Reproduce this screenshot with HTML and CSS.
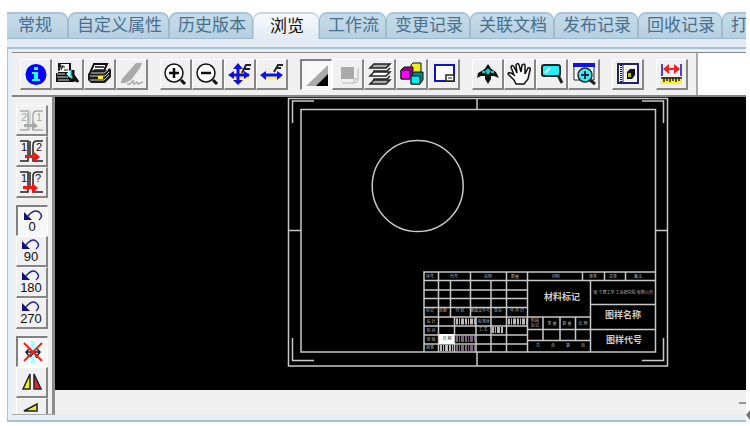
FILE: index.html
```html
<!DOCTYPE html>
<html lang="zh-CN">
<head>
<meta charset="utf-8">
<title>浏览</title>
<link rel="stylesheet" href="styles.css">
</head>
<body>
<div class="window">
  <nav class="tabs">
    <button class="tab tab-first">常规</button>
    <button class="tab">自定义属性</button>
    <button class="tab">历史版本</button>
    <button class="tab tab-active">浏览</button>
    <button class="tab">工作流</button>
    <button class="tab">变更记录</button>
    <button class="tab">关联文档</button>
    <button class="tab">发布记录</button>
    <button class="tab">回收记录</button>
    <button class="tab tab-last">打</button>
  </nav>
  <main class="panel">
    <div class="viewer">
      <header class="topbar">
        <div class="toolbar">
          <div class="group">
            <button class="tool" aria-label="信息"><svg viewBox="0 0 28 27"><circle cx="15" cy="14.500" r="10.500" fill="#00f"/><path d="M13 7h4v3h-4zM11 12h6v7h2v2h-8v-2h2v-5h-2z" fill="#2ff"/></svg></button>
            <button class="tool" aria-label="打印预览"><svg viewBox="0 0 28 27"><path d="M5 3h13v7l3 2v10H3v-9h2z" fill="#111"/><path d="M8 4h8v8H5z" fill="#f4f4f4"/><path d="M8 5l-2 6M8 7h4M10 5l-2 5M11 10h4" stroke="#111" fill="none"/><path d="M4 14h8M4 17h11M5 20h11" stroke="#ddd"/><path d="M13 14l6-5 2 5-2 5z" fill="#4ee"/><path d="M17 10v8l-3-4z" fill="#dff"/><path d="M20 10v5l5 7M20 18l3 3" stroke="#111" stroke-width="3" fill="none"/></svg></button>
            <button class="tool" aria-label="打印"><svg viewBox="0 0 28 27"><path d="M9 4h13l-4 9H5z" fill="#fff" stroke="#111" stroke-width="2"/><path d="M10 7h9M9 10h9" stroke="#111" stroke-width="1.500"/><path d="M3 14l5-4h14l3-2 1 2v7l-6 6H6l-3-3z" fill="#1c1c1c"/><path d="M6 13h13l4-3M5 16h15l4-4M5 20h14l5-5" stroke="#ccc" fill="none"/><path d="M13 16h5v3h-5z" fill="#fe2"/></svg></button>
            <button class="tool" aria-label="标注"><svg viewBox="0 0 28 27"><path d="M19 3h6l-2 5-9 12-6 3H4l1-4z" fill="#aaa"/><path d="M4 23l6-6M10 24h3l3-3 1 3 3-2 1 2 5-2" stroke="#aaa" fill="none" stroke-width="1.500"/></svg></button>
          </div>
          <div class="group">
            <button class="tool" aria-label="放大"><svg viewBox="0 0 28 27"><circle cx="13" cy="13" r="9" fill="#fff" stroke="#111" stroke-width="1.500"/><path d="M8 13h10M13 8v10" stroke="#111" stroke-width="2.500"/><path d="M20 20l4 4" stroke="#111" stroke-width="3"/></svg></button>
            <button class="tool" aria-label="缩小"><svg viewBox="0 0 28 27"><circle cx="13" cy="13" r="9" fill="#fff" stroke="#111" stroke-width="1.500"/><path d="M8 13h10" stroke="#111" stroke-width="2.500"/><path d="M20 20l4 4" stroke="#111" stroke-width="3"/></svg></button>
            <button class="tool" aria-label="适合窗口"><svg viewBox="0 0 28 27"><path d="M7 18h17M15 8v15" stroke="#fe4" stroke-width="2"/><path d="M6 15h18M13 6v17" stroke="#11d" stroke-width="3"/><path d="M8 9l5-6 5 6zM8 20l5 5 5-5zM9 11v8l-6-4zM19 11v8l6-4z" fill="#11d"/><path d="M17 13l4-8h5M20 9h5" stroke="#222" stroke-width="2" fill="none"/></svg></button>
            <button class="tool" aria-label="适合宽度"><svg viewBox="0 0 28 27"><path d="M7 18h17" stroke="#fe4" stroke-width="2"/><path d="M6 15h17" stroke="#11e" stroke-width="3"/><path d="M9 11v9l-6-5zM20 11v9l6-5z" fill="#11e"/><path d="M17 12l4-7h5M19 8h5" stroke="#222" stroke-width="2" fill="none"/></svg></button>
          </div>
          <div class="group">
            <button class="tool tool-pressed" aria-label="黑白"><svg viewBox="0 0 28 27"><path d="M4 4h22v21H4z" fill="#f8f8f8"/><path d="M26 4v21H4z" fill="#aaa"/><path d="M26 13v12H14z" fill="#000"/></svg></button>
            <button class="tool" aria-label="线宽"><svg viewBox="0 0 28 27"><path d="M8 7h13v12H8z" fill="#aaa"/><path d="M25 8v11q0 4-4 4H9M21 19v4M21 19h4" stroke="#b8b8b8" fill="none"/></svg></button>
            <button class="tool" aria-label="图层"><svg viewBox="0 0 28 27"><g fill="#aaa" stroke="#222" stroke-width="1.500"><path d="M9 4h16l-4 4H5z"/><path d="M9 12h16l-4 4H5z" fill="#fff"/><path d="M9 20h16l-4 4H5z"/></g><path d="M8 11h14l3-3M8 19h14l3-3" stroke="#222" fill="none" stroke-width="1.500"/></svg></button>
            <button class="tool" aria-label="部件"><svg viewBox="0 0 28 27"><g stroke="#111"><path d="M14 5l2-2h8v8l-2 3h-8z" fill="#ee2"/><path d="M4 10l3-3h9v9l-3 3H4z" fill="#908"/><path d="M4 10h9v9H4z" fill="#f0f"/><path d="M14 16l3-4h9v8l-3 4h-9z" fill="#088"/><path d="M14 16h9v8h-9z" fill="#0ee"/></g></svg></button>
            <button class="tool" aria-label="视图"><svg viewBox="0 0 28 27"><path d="M6 5h19v16H6z" fill="#fff" stroke="#11c" stroke-width="2"/><path d="M17 15h8v6h-8z" fill="#fff" stroke="#222" stroke-width="1.500"/><path d="M19 18h4" stroke="#222"/></svg></button>
          </div>
          <div class="group">
            <button class="tool" aria-label="旋转"><svg viewBox="0 0 28 27"><path d="M15 4l4 6h-1v9l-3 5-3-5v-9h-1z" fill="#111"/><path d="M12 9l-7 4-1 5 4-2h5zM18 9l5 3 3 6-5-2h-4z" fill="#111"/><path d="M15 8l3 3-3 4-3-4zM9 11h3v2H9zM18 11h3v2h-3z" fill="#1cc"/></svg></button>
            <button class="tool" aria-label="平移"><svg viewBox="0 0 28 27"><path d="M11 24l-2-4-6-6q0-2 3-1l3 2-3-8q1-3 3 0l3 6-1-8q2-3 3 0l2 7 1-7q3-2 3 1v8l3-6q3-1 2 2l-2 9-4 5z" fill="#fff" stroke="#111" stroke-width="1.500"/></svg></button>
            <button class="tool" aria-label="放大镜"><svg viewBox="0 0 28 27"><path d="M7 5h14q2 0 2 2v7q0 2-2 2H7q-2 0-2-2V7q0-2 2-2z" fill="#2ef" stroke="#222" stroke-width="2"/><path d="M8 13l5-5" stroke="#dff" stroke-width="2"/><path d="M21 15l4 8" stroke="#222" stroke-width="3"/></svg></button>
            <button class="tool" aria-label="窗口缩放"><svg viewBox="0 0 28 27"><path d="M5 4h20v16H5z" fill="#fff" stroke="#222"/><path d="M4 3h22v4H4z" fill="#11e"/><circle cx="16" cy="15" r="7" fill="#3ee" stroke="#222" stroke-width="1.500"/><path d="M12 15h8M16 11v8" stroke="#124" stroke-width="2"/><path d="M21 20l5 4" stroke="#222" stroke-width="3"/></svg></button>
          </div>
          <div class="group">
            <button class="tool" aria-label="手册"><svg viewBox="0 0 28 27"><path d="M5 4h20v19H5z" fill="#fff" stroke="#226" stroke-width="2"/><path d="M10 4v19" stroke="#226"/><path d="M8 5v17" stroke="#111" stroke-width="2" stroke-dasharray="1 1"/><path d="M12 7h11v14H12z" fill="#eee"/><path d="M14 12l3-3h5v6l-3 4h-5z" fill="#111"/><path d="M15 13h3v4h-3z" fill="#bb1"/></svg></button>
          </div>
          <div class="group">
            <button class="tool" aria-label="测量"><svg viewBox="0 0 28 27"><path d="M5 4v12M24 4v12" stroke="#44d" stroke-width="2"/><path d="M8 9h13" stroke="#e22" stroke-width="2"/><path d="M12 4v10L6 9zM17 4v10l6-5z" fill="#e22"/><path d="M4 17h21v7H4z" fill="#fe2"/><path d="M4 18h21M7 17v5M10 17v4M13 17v5M16 17v4M19 17v5M22 17v4" stroke="#222" stroke-width="1.500"/></svg></button>
          </div>
        </div>
      </header>
      <div class="workspace">
        <aside class="sidebar">
          <div class="side-group">
            <button class="tool" aria-label="比较 2 1"><svg viewBox="0 0 28 27"><g fill="none" stroke="#aaa" stroke-width="1.500"><path d="M3 5h8v19H3M26 5h-6q-4 0-4 4v15h10"/></g><path d="M13 5v19" stroke="#bbb"/><text x="4" y="15" class="mark mark-off">2</text><text x="19" y="15" class="mark mark-off">1</text><path d="M7 18h8v-3l6 5-6 4v-3H7z" fill="#aaa"/></svg></button>
            <button class="tool" aria-label="比较 1 2"><svg viewBox="0 0 28 27"><g fill="none" stroke="#222" stroke-width="1.500"><path d="M3 4h8v20H3M26 4h-6q-4 0-4 4v16h10M13 4v14"/></g><text x="4" y="14" class="mark">1</text><text x="19" y="14" class="mark">2</text><path d="M8 18h9v-3l6 5-6 5v-4H8z" fill="#f11"/></svg></button>
            <button class="tool" aria-label="比较 1 ?"><svg viewBox="0 0 28 27"><g fill="none" stroke="#222" stroke-width="1.500"><path d="M3 4h8v20H3M26 4h-6q-4 0-4 4v16h10M13 4v14"/></g><text x="4" y="14" class="mark">1</text><text x="18" y="14" class="mark">?</text><path d="M6 18h9v-3l6 5-6 5v-4H6z" fill="#f11"/></svg></button>
          </div>
          <div class="side-group">
            <button class="tool tool-pressed"><svg viewBox="0 0 28 27"><path d="M10 9q6-7 11-4 5 4 0 8" fill="none" stroke="#228" stroke-width="1.500"/><path d="M6 5v8h8z" fill="#117"/><text x="14" y="24" class="degree">0</text></svg></button>
            <button class="tool"><svg viewBox="0 0 28 27"><path d="M9 8q6-7 10-4 5 4 0 8" fill="none" stroke="#228" stroke-width="1.500"/><path d="M5 4v8h8z" fill="#117"/><text x="14" y="24" class="degree">90</text></svg></button>
            <button class="tool"><svg viewBox="0 0 28 27"><path d="M9 8q6-7 10-4 5 4 0 8" fill="none" stroke="#228" stroke-width="1.500"/><path d="M5 4v8h8z" fill="#117"/><text x="14" y="24" class="degree">180</text></svg></button>
            <button class="tool"><svg viewBox="0 0 28 27"><path d="M9 8q6-7 10-4 5 4 0 8" fill="none" stroke="#228" stroke-width="1.500"/><path d="M5 4v8h8z" fill="#117"/><text x="14" y="24" class="degree">270</text></svg></button>
          </div>
          <div class="side-group">
            <button class="tool tool-pressed" aria-label="取消镜像"><svg viewBox="0 0 28 27"><path d="M15 3v22" stroke="#aff" stroke-width="5"/><path d="M8 14h13M11 11l-3 3 3 4M19 11l3 3-3 4M12 19l4-5 3 6" stroke="#222" stroke-width="1.500" fill="none"/><path d="M6 5l18 18M24 5L6 23" stroke="#e22" stroke-width="2"/></svg></button>
            <button class="tool" aria-label="水平镜像"><svg viewBox="0 0 28 27"><path d="M13 6v15H6z" fill="#ee2" stroke="#222" stroke-width="1.500"/><path d="M17 6v15h7z" fill="#e22" stroke="#222" stroke-width="1.500"/></svg></button>
            <button class="tool" aria-label="垂直镜像"><svg viewBox="0 0 28 27"><path d="M7 12h13V5z" fill="#ee2" stroke="#222" stroke-width="1.500"/><path d="M7 18h13v6z" fill="#e22" stroke="#222" stroke-width="1.500"/></svg></button>
          </div>
        </aside>
        <section class="stage">
          <svg class="drawing" viewBox="55 97 691 293" role="img" aria-label="图纸">
            <g class="frame">
              <path d="M288.500 98.500h379v267.500h-379zM301 109.500h354.500V352H301z"/>
              <path d="M477 98v11M477 352v14M288 230.500h13M655 230.500h13"/>
              <path d="M292.500 123v-22H314M642 101h21.500v22M292.500 338v22.500H314M642 360.500h21.500V338"/>
              <circle cx="417.700" cy="186" r="45.500"/>
            </g>
            <g class="frame">
              <path d="M424 352v-80h231M424 280.500h231M424 290h103.500M424 298.500h103.500M424 307.500h103.500M424 317h166.500M424 326h103.500M424 335h103.500M424 344h103.500"/>
              <path d="M438.500 272v80M450.500 281v36M470.500 272v45M491 281v71M506.500 272v80M527.500 272v80M454.500 317v35M476 317v35"/>
              <path d="M582.500 272v8M604.500 272v8M625.500 272v8M590.500 281v71M590.500 304.500h65M527.500 329.500H655M527.500 340.500h63M543 317v24M560 317v24M575.500 317v24"/>
            </g>
            <path d="M439 334h15v10h-15z" fill="#fff"/>
            <g class="noise">
              <path d="M456 321.500h20M508 321.500h19M492 330h12M440 348h13"/>
              <path d="M456 339h19M456 348h19" class="dim"/>
            </g>
            <g class="fine">
              <text x="430" y="278">序号</text><text x="454" y="278">代号</text><text x="488" y="278">名称</text><text x="515" y="278">数量</text><text x="556" y="278">材料</text><text x="593" y="278">单重</text><text x="613" y="278">总重</text><text x="638" y="278">备注</text>
              <text x="430" y="312">标记</text><text x="443" y="312">处数</text><text x="460" y="312">分 区</text><text x="480" y="312">更改文件号</text><text x="498" y="312">签名</text><text x="517" y="312">年 月 日</text>
              <text x="431" y="323">设 计</text><text x="431" y="332">校 对</text><text x="431" y="341">审 核</text><text x="430" y="349">批准</text><text x="484" y="323">标准化</text><text x="483" y="331">工 艺</text>
              <text x="447" y="340" class="ink">日 期</text>
              <text x="535" y="322">阶段</text><text x="535" y="327">标记</text><text x="552" y="325">重 量</text><text x="567" y="325">数 量</text><text x="583" y="325">比 例</text>
              <text x="538" y="347">共</text><text x="553" y="347">页</text><text x="568" y="347">第</text><text x="583" y="347">页</text>
              <text x="623" y="294" class="company">南 宁理工学 工业研究院 有限公司</text>
            </g>
            <g class="title">
              <text x="562" y="300">材料标记</text><text x="623" y="318">图样名称</text><text x="624" y="343">图样代号</text>
            </g>
          </svg>
          <footer class="status"><span class="grip"></span></footer>
        </section>
      </div>
    </div>
  </main>
  <svg class="edge-arrow" viewBox="0 0 4 10"><path d="M4 0v10L0 5z" fill="#777"/></svg>
</div>
</body>
</html>
```
FILE: styles.css
```css
* { box-sizing: border-box; }

body {
  margin: 0;
  background: #fff;
  font-family: "Liberation Sans", "Noto Sans CJK SC", sans-serif;
}

button {
  margin: 0;
  padding: 0;
  font: inherit;
}

.window {
  position: relative;
  display: flex;
  flex-direction: column;
  height: 100vh;
  padding: 12px 4px 4px 7px;
}

.tabs {
  display: flex;
  flex: none;
  height: 27px;
  overflow: hidden;
}

.tab {
  flex: none;
  height: 27px;
  padding: 0 6px 0 8px;
  border: 1px solid #9dbacd;
  border-top: 2px solid #a9c3d4;
  border-radius: 8px 8px 0 0;
  background: linear-gradient(#c6dbe9, #b6d0e1);
  color: #47708f;
  font-size: 17px;
  line-height: 24px;
  white-space: nowrap;
}

.tab-first {
  padding-left: 11px;
  padding-right: 15px;
  border-left: 0;
  border-top-left-radius: 0;
}

.tab-active {
  padding: 0 14px 0 16px;
  border-color: #c4d6e4;
  border-bottom: 0;
  background: linear-gradient(#f6fafd, #e2ebf3);
  color: #111;
}

.tab-last { padding-right: 60px; }

.panel {
  flex: 1;
  min-height: 0;
  padding: 3px 0 5px 4px;
  border-top: 2px solid #a8c0d2;
  border-left: 1px solid #a8c4da;
  border-bottom: 2px solid #a8c0d4;
  background: #e6eef6;
  margin-top: 8px;
  box-shadow: 0 -8px 0 #e2ebf3;
}

.viewer {
  display: flex;
  flex-direction: column;
  height: 100%;
  border-top: 1px solid #888;
  background: #f0f0f0;
}

.topbar {
  flex: none;
  border-bottom: 2px solid #858585;
  background: #fff;
}

.toolbar {
  display: flex;
  gap: 12px;
  width: max-content;
  padding: 6px 8px 5px;
  border-right: 2px solid #aaa;
  background: #f0f0f0;
}

.group { display: flex; }

.tool {
  display: grid;
  place-items: start;
  width: 32px;
  height: 31px;
  border: solid;
  border-width: 1px 2px 2px 1px;
  border-color: #fff #868686 #868686 #fff;
  background: #f0f0f0;
}

.tool svg {
  display: block;
  width: 28px;
  height: 27px;
}

.tool-pressed {
  border-width: 2px 1px 1px 2px;
  border-color: #808080 #fff #fff #808080;
  background: #f7f7f7;
}

.workspace {
  display: flex;
  flex: 1;
  min-height: 0;
}

.sidebar {
  display: flex;
  flex: none;
  flex-direction: column;
  gap: 7px;
  width: 43px;
  padding: 8px 4px 0;
  overflow: hidden;
  border-right: 3px solid #8c8c8c;
  border-bottom: 1px solid #aaa;
}

.mark {
  fill: #111;
  font-size: 11px;
}

.mark-off { fill: #aaa; }

.degree {
  fill: #111;
  font-size: 13px;
  text-anchor: middle;
}

.stage {
  display: flex;
  flex: 1;
  flex-direction: column;
  min-width: 0;
  background: #000;
}

.drawing {
  flex: 1;
  width: 100%;
  min-height: 0;
}

.frame {
  fill: none;
  stroke: #c8c8c8;
  stroke-width: 1.5;
}

.noise {
  fill: none;
  stroke: #bbb;
  stroke-width: 6;
  stroke-dasharray: 2 1 1 1 3 1;
}

.noise .dim { stroke: #767; }

.fine {
  fill: #bbb;
  font-size: 4px;
  text-anchor: middle;
}

.fine .ink { fill: #222; }

.title {
  fill: #ccc;
  font-size: 9px;
  font-weight: bold;
  text-anchor: middle;
}

.status {
  display: flex;
  flex: none;
  justify-content: flex-end;
  height: 25px;
  padding-top: 12px;
  background: #f0f0f0;
}

.grip {
  width: 7px;
  height: 2px;
  background: #999;
}

.edge-arrow {
  position: absolute;
  right: 0;
  bottom: 6px;
  width: 4px;
  height: 10px;
}
```
